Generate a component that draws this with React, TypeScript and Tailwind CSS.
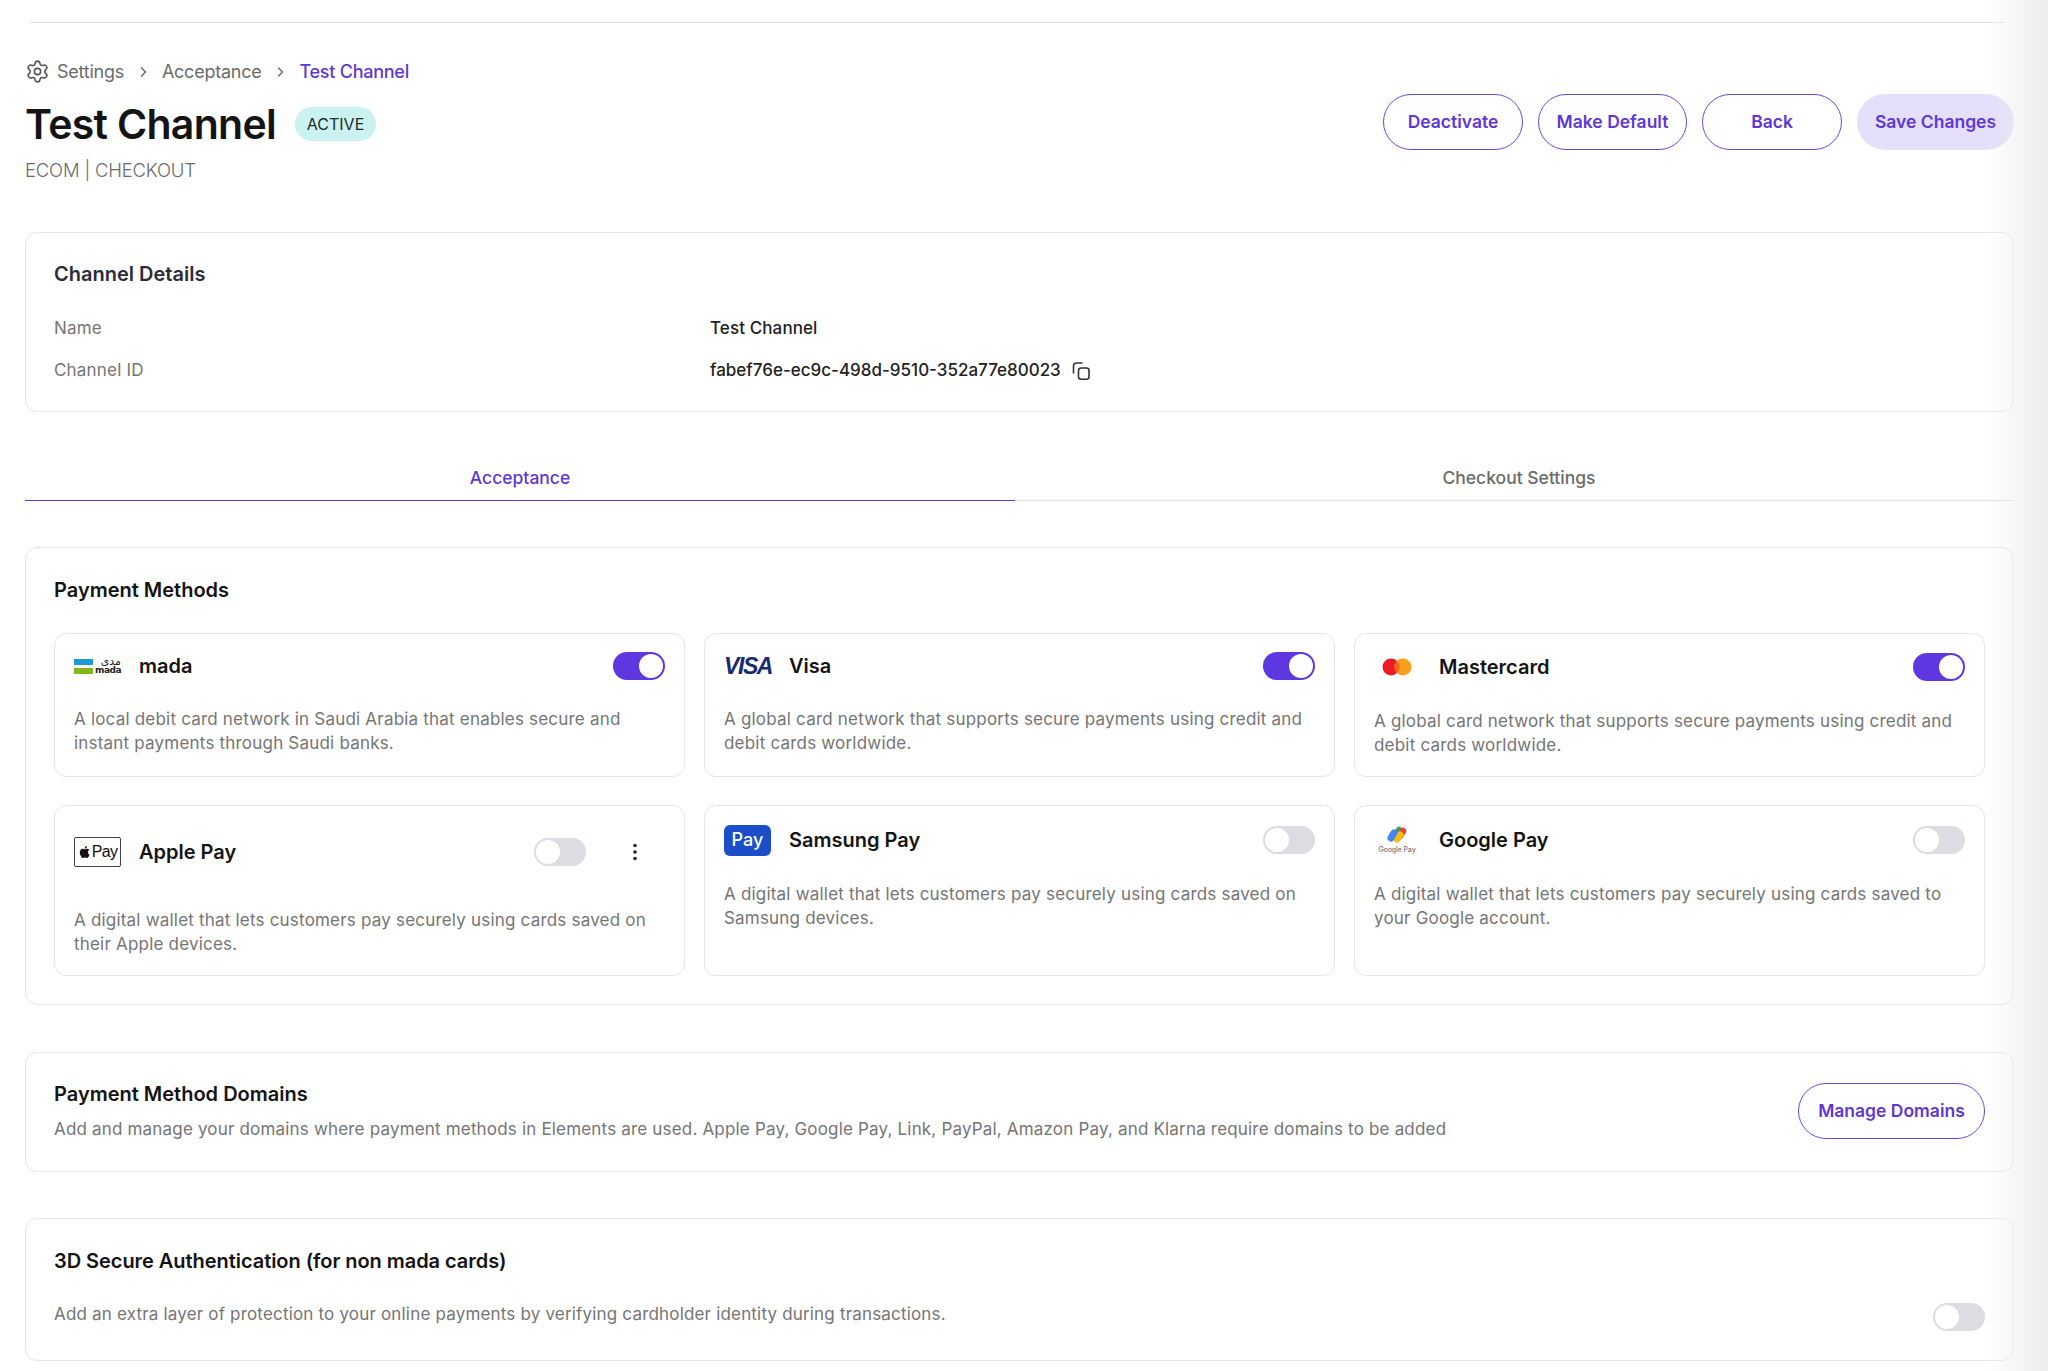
import React from "react";
import { Settings } from "lucide-react";

const FONT = "font-['Inter','Liberation_Sans',sans-serif]";

function Toggle({ on }: { on: boolean }) {
  return (
    <div
      className={
        "flex h-[28px] w-[52px] shrink-0 items-center rounded-full px-[2px] " +
        (on ? "justify-end bg-[#5f37e0]" : "justify-start bg-[#dcdde2]")
      }
    >
      <div className="h-[24px] w-[24px] rounded-full bg-white" />
    </div>
  );
}

function MadaLogo() {
  return (
    <div className="flex w-[46px] items-center gap-[2px]">
      <div className="flex flex-col gap-[3px]">
        <div className="h-[6px] w-[19px] bg-[#1b9ad6]" />
        <div className="h-[6px] w-[19px] bg-[#84b819]" />
      </div>
      <div className="flex flex-col items-end font-['DejaVu_Sans',sans-serif] text-[#222]">
        <span className="text-[11px] leading-[8px]">مدى</span>
        <span className="text-[9px] leading-[9px] font-bold tracking-[-0.5px]">mada</span>
      </div>
    </div>
  );
}

function VisaLogo() {
  return (
    <span className="block w-[47px] font-['Liberation_Sans',sans-serif] text-[23px] leading-none font-bold tracking-[-1.4px] text-[#1a2a72] italic">
      VISA
    </span>
  );
}

function MasterLogo() {
  return (
    <svg width="30" height="18" viewBox="0 0 30 18">
      <circle cx="9" cy="9" r="8.5" fill="#eb1c26" />
      <circle cx="21" cy="9" r="8.5" fill="#f99f1c" />
      <path d="M15 2.7a8.5 8.5 0 0 1 0 12.6a8.5 8.5 0 0 1 0-12.6z" fill="#f2651f" />
    </svg>
  );
}

function ApplePayLogo() {
  return (
    <div className="flex h-[30px] w-[47px] items-center justify-center rounded-[2px] border border-[#444] bg-white">
      <svg width="14" height="16" viewBox="0 0 24 24" fill="#111">
        <path d="M17.05 12.54c-.03-2.6 2.12-3.85 2.22-3.91-1.21-1.77-3.09-2.01-3.76-2.04-1.6-.16-3.12.94-3.93.94-.81 0-2.06-.92-3.39-.89-1.74.03-3.35 1.01-4.25 2.57-1.81 3.14-.46 7.8 1.3 10.35.86 1.25 1.89 2.65 3.24 2.6 1.3-.05 1.79-.84 3.36-.84s2.01.84 3.39.81c1.4-.02 2.28-1.27 3.14-2.53.99-1.45 1.4-2.85 1.42-2.92-.03-.01-2.72-1.04-2.74-4.14zM14.46 4.9c.72-.87 1.2-2.08 1.07-3.28-1.03.04-2.28.69-3.02 1.55-.66.77-1.24 2-1.09 3.18 1.15.09 2.33-.58 3.04-1.45z" />
      </svg>
      <span className="font-['Liberation_Sans',sans-serif] text-[16px] leading-none tracking-[-0.7px] text-[#111]">Pay</span>
    </div>
  );
}

function SamsungLogo() {
  return (
    <div className="flex h-[31px] w-[47px] items-center justify-center rounded-[6px] bg-[#1b4ec8] text-[18px] leading-none font-medium text-white">
      Pay
    </div>
  );
}

function GoogleLogo() {
  return (
    <div className="flex w-[36px] flex-col items-center">
      <svg width="22" height="18" viewBox="0 0 22 18" fill="none" strokeLinecap="round">
        <line x1="9" y1="10" x2="13" y2="4" stroke="#34a853" strokeWidth="6.5" />
        <line x1="14" y1="10" x2="17" y2="5" stroke="#ea4335" strokeWidth="6.5" />
        <line x1="11" y1="13" x2="14" y2="9" stroke="#fbbc04" strokeWidth="7" />
        <line x1="5" y1="12" x2="8" y2="7" stroke="#4285f4" strokeWidth="7" />
      </svg>
      <span className="mt-[2px] text-[7px] leading-[8px] font-medium tracking-[-0.1px] whitespace-nowrap text-[#777]">Google Pay</span>
    </div>
  );
}

function Method({
  logo,
  logoBox,
  name,
  on,
  desc,
  head,
  mt,
  kebab,
}: {
  logo: React.ReactNode;
  logoBox: string;
  name: string;
  on: boolean;
  desc: string[];
  head: string;
  mt: string;
  kebab?: boolean;
}) {
  return (
    <div className="rounded-[12px] border border-[#e6e6e8] bg-white px-[19px]">
      <div className={"flex items-center " + head}>
        <div className={"flex shrink-0 items-center " + logoBox}>{logo}</div>
        <span className="text-[20px] leading-none font-semibold text-[#141414]">{name}</span>
        <div className="ml-auto flex items-center">
          <Toggle on={on} />
          {kebab && (
            <svg className="mr-[28px] ml-[47px]" width="4" height="18" viewBox="0 0 4 18" fill="#222">
              <circle cx="2" cy="2.5" r="1.8" />
              <circle cx="2" cy="9" r="1.8" />
              <circle cx="2" cy="15.5" r="1.8" />
            </svg>
          )}
        </div>
      </div>
      <p className={"text-[17px] leading-[24px] tracking-[0.2px] text-[#757575] " + mt}>
        {desc.map((l) => (
          <span key={l} className="block whitespace-nowrap">
            {l}
          </span>
        ))}
      </p>
    </div>
  );
}

function OutlineButton({ w, children }: { w: string; children: React.ReactNode }) {
  return (
    <button
      className={
        "flex h-[56px] items-center justify-center rounded-full border border-[#6a48d8] bg-white text-[17.5px] font-semibold text-[#5f37d6] " +
        w
      }
    >
      {children}
    </button>
  );
}

export default function App() {
  return (
    <div className={"relative h-[1371px] w-[2048px] overflow-hidden bg-white " + FONT}>
      <div className="pt-[22px] pr-[43px] pl-[30px]">
        <div className="h-px bg-[#e4e4e6]" />
      </div>
      <div className="pr-[34px] pl-[25px]">
        {/* breadcrumb */}
        <div className="mt-[36px] flex h-[24px] items-center text-[18px] tracking-[-0.25px] text-[#6b6b6b]">
          <Settings size={25} strokeWidth={1.5} color="#555" />
          <span className="ml-[7px]">Settings</span>
          <svg className="mx-[13px] mt-[2px]" width="12" height="12" viewBox="0 0 12 12" fill="none" stroke="#666" strokeWidth="1.4">
            <path d="M4 1.5L8.5 6 4 10.5" />
          </svg>
          <span>Acceptance</span>
          <svg className="mx-[13px] mt-[2px]" width="12" height="12" viewBox="0 0 12 12" fill="none" stroke="#666" strokeWidth="1.4">
            <path d="M4 1.5L8.5 6 4 10.5" />
          </svg>
          <span className="font-medium text-[#5f37d6]">Test Channel</span>
        </div>

        {/* header */}
        <div className="mt-[-1px] flex items-start justify-between">
          <div>
            <div className="mt-[18px] flex items-center">
              <h1 className="text-[41px] leading-[48px] font-semibold tracking-[-0.7px] text-[#141414]">Test Channel</h1>
              <span className="ml-[19px] flex h-[34px] w-[81px] items-center justify-center rounded-full bg-[#c9f2f1] text-[16px] text-[#1c2b2b]">
                ACTIVE
              </span>
            </div>
            <div className="mt-[10px] text-[18.5px] leading-[24px] font-light tracking-[-0.2px] text-[#6b6b6b]">ECOM | CHECKOUT</div>
          </div>
          <div className="mt-[12px] flex gap-[15px]">
            <OutlineButton w="w-[140px]">Deactivate</OutlineButton>
            <OutlineButton w="w-[149px]">Make Default</OutlineButton>
            <OutlineButton w="w-[140px]">Back</OutlineButton>
            <button className="flex h-[56px] w-[157px] items-center justify-center rounded-full bg-[#e4dffb] text-[17.5px] font-semibold text-[#5f37d6]">
              Save Changes
            </button>
          </div>
        </div>

        {/* channel details */}
        <section className="mt-[50px] h-[180px] rounded-[12px] border border-[#e6e6e8] bg-white px-[28px] pt-[28px]">
          <h2 className="text-[20px] leading-[26px] font-semibold text-[#2c2c38]">Channel Details</h2>
          <div className="mt-[29px] grid grid-cols-[656px_1fr] gap-y-[18px] text-[17px] leading-[24px]">
            <span className="tracking-[0.2px] text-[#757575]">Name</span>
            <span className="font-medium tracking-[0.1px] text-[#222]">Test Channel</span>
            <span className="tracking-[0.2px] text-[#757575]">Channel ID</span>
            <span className="flex items-center text-[#222]">
              <span className="font-medium">fabef76e-ec9c-498d-9510-352a77e80023</span>
              <svg className="mt-[2px] ml-[11px]" width="18" height="18" viewBox="0 0 18 18" fill="none" stroke="#333" strokeWidth="1.6">
                <rect x="6.5" y="6" width="10.5" height="11.2" rx="2.5" />
                <path d="M1.5 11.5V4a3 3 0 0 1 3-3h6" />
              </svg>
            </span>
          </div>
        </section>

        {/* tabs */}
        <div className="mt-[47px] grid grid-cols-[990px_1fr] text-[17.5px] font-medium">
          <div className="flex h-[42px] items-start justify-center border-b border-[#5f37d6] pt-[6px] text-[#5f37d6]">Acceptance</div>
          <div className="flex h-[42px] items-start justify-center border-b border-[#dfdfe2] pt-[6px] pl-[9px] text-[#6b6b6b]">Checkout Settings</div>
        </div>

        {/* payment methods */}
        <section className="mt-[46px] h-[458px] rounded-[12px] border border-[#e6e6e8] bg-white px-[28px] pt-[29px]">
          <h2 className="text-[20px] leading-[26px] font-semibold text-[#141414]">Payment Methods</h2>
          <div className="mt-[30px] grid grid-cols-3 gap-x-[19px] gap-y-[28px] [grid-template-rows:144px_171px]">
            <Method
              logo={<MadaLogo />}
              logoBox="w-[65px]"
              name="mada"
              on
              head="h-[32px] mt-[16px]"
              mt="mt-[25px]"
              desc={["A local debit card network in Saudi Arabia that enables secure and", "instant payments through Saudi banks."]}
            />
            <Method
              logo={<VisaLogo />}
              logoBox="w-[65px]"
              name="Visa"
              on
              head="h-[32px] mt-[16px]"
              mt="mt-[25px]"
              desc={["A global card network that supports secure payments using credit and", "debit cards worldwide."]}
            />
            <Method
              logo={<MasterLogo />}
              logoBox="w-[65px] pl-[8px]"
              name="Mastercard"
              on
              head="h-[32px] mt-[17px]"
              mt="mt-[26px]"
              desc={["A global card network that supports secure payments using credit and", "debit cards worldwide."]}
            />
            <Method
              logo={<ApplePayLogo />}
              logoBox="w-[65px]"
              name="Apple Pay"
              on={false}
              kebab
              head="h-[32px] mt-[30px]"
              mt="mt-[40px]"
              desc={["A digital wallet that lets customers pay securely using cards saved on", "their Apple devices."]}
            />
            <Method
              logo={<SamsungLogo />}
              logoBox="w-[65px]"
              name="Samsung Pay"
              on={false}
              head="h-[32px] mt-[18px]"
              mt="mt-[26px]"
              desc={["A digital wallet that lets customers pay securely using cards saved on", "Samsung devices."]}
            />
            <Method
              logo={<GoogleLogo />}
              logoBox="w-[65px] pl-[5px]"
              name="Google Pay"
              on={false}
              head="h-[32px] mt-[18px]"
              mt="mt-[26px]"
              desc={["A digital wallet that lets customers pay securely using cards saved to", "your Google account."]}
            />
          </div>
        </section>

        {/* domains */}
        <section className="mt-[47px] flex h-[120px] items-start justify-between rounded-[12px] border border-[#e6e6e8] bg-white px-[28px]">
          <div className="pt-[28px]">
            <h2 className="text-[20px] leading-[26px] font-semibold text-[#141414]">Payment Method Domains</h2>
            <p className="mt-[10px] text-[17px] leading-[24px] tracking-[0.18px] whitespace-nowrap text-[#757575]">
              Add and manage your domains where payment methods in Elements are used. Apple Pay, Google Pay, Link, PayPal, Amazon Pay, and Klarna require domains to be added
            </p>
          </div>
          <div className="pt-[30px]">
            <OutlineButton w="w-[187px]">Manage Domains</OutlineButton>
          </div>
        </section>

        {/* 3DS */}
        <section className="mt-[46px] h-[143px] rounded-[12px] border border-[#e6e6e8] bg-white px-[28px] pt-[29px]">
          <h2 className="text-[20px] leading-[26px] font-semibold tracking-[-0.05px] text-[#141414]">3D Secure Authentication (for non mada cards)</h2>
          <div className="mt-[28px] flex items-start justify-between">
            <p className="text-[17px] leading-[24px] tracking-[0.18px] text-[#757575]">
              Add an extra layer of protection to your online payments by verifying cardholder identity during transactions.
            </p>
            <div className="mt-[1px]">
              <Toggle on={false} />
            </div>
          </div>
        </section>
      </div>

      {/* right-edge shadow over the page */}
      <div className="pointer-events-none absolute inset-y-0 right-0 w-[60px] bg-gradient-to-r from-white/0 to-[#ececec]" />
    </div>
  );
}
